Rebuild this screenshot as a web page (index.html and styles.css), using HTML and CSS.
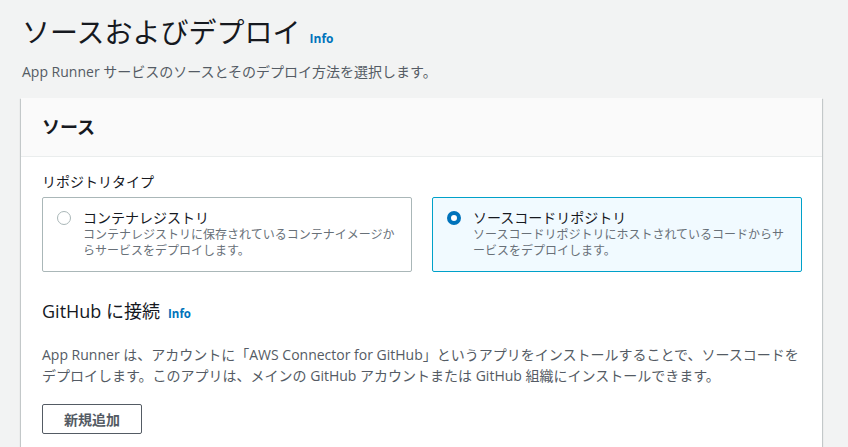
FILE: index.html
```html
<!DOCTYPE html>
<html lang="ja">
<head>
<meta charset="utf-8">
<link rel="stylesheet" href="styles.css">
</head>
<body>
<div class="page">
  <div class="page-head">
    <h1 class="title"><span>ソースおよびデプロイ</span><a class="info info-title">Info</a></h1>
    <p class="subtitle">App Runner サービスのソースとそのデプロイ方法を選択します。</p>
  </div>
  <section class="card">
    <div class="card-head"><h2>ソース</h2></div>
    <div class="card-body">
      <div class="label">リポジトリタイプ</div>
      <div class="tiles">
        <div class="tile">
          <span class="radio"></span>
          <div class="tile-text">
            <div class="tile-title">コンテナレジストリ</div>
            <div class="tile-desc">コンテナレジストリに保存されているコンテナイメージか<br>らサービスをデプロイします。</div>
          </div>
        </div>
        <div class="tile tile-selected">
          <span class="radio radio-on"></span>
          <div class="tile-text">
            <div class="tile-title">ソースコードリポジトリ</div>
            <div class="tile-desc">ソースコードリポジトリにホストされているコードからサ<br>ービスをデプロイします。</div>
          </div>
        </div>
      </div>
      <h3 class="sub-head"><span>GitHub に接続</span><a class="info info-sub">Info</a></h3>
      <p class="para">App Runner は、アカウントに「AWS Connector for GitHub」というアプリをインストールすることで、ソースコードを<br>デプロイします。このアプリは、メインの GitHub アカウントまたは GitHub 組織にインストールできます。</p>
      <button class="btn">新規追加</button>
    </div>
  </section>
</div>
</body>
</html>
```

FILE: styles.css
```css
html, body {
  margin: 0;
  padding: 0;
  background: #f2f3f3;
  font-family: "Open Sans", "Noto Sans CJK JP", sans-serif;
  color: #16191f;
  overflow: hidden;
}
.page {
  padding: 14px 26px 0 21px;
}
.page-head {
  padding-left: 1px;
}
.title {
  margin: 0;
  display: flex;
  align-items: baseline;
  height: 36px;
  font-size: 28px;
  line-height: 36px;
  font-weight: 400;
  color: #16191f;
}
.info {
  color: #0073bb;
  font-weight: 700;
  font-size: 12px;
  line-height: 16px;
  font-family: "Open Sans", sans-serif;
}
.info-title {
  margin-left: 9px;
}
.subtitle {
  margin: 12px 0 0;
  font-size: 14px;
  line-height: 20px;
  color: #545b64;
}
.card {
  margin-top: 16px;
  background: #fff;
  box-shadow: 0 1px 1px 0 rgba(0, 28, 36, 0.3), 1px 1px 1px 0 rgba(0, 28, 36, 0.15), -1px 1px 1px 0 rgba(0, 28, 36, 0.15);
}
.card-head {
  background: #fafafa;
  border-bottom: 1px solid #eaeded;
  padding: 18px 21px;
}
.card-head h2 {
  margin: 0;
  font-size: 18px;
  line-height: 22px;
  font-weight: 700;
}
.card-body {
  padding: 15px 20px 30px 21px;
}
.label {
  font-size: 14px;
  line-height: 20px;
  color: #16191f;
}
.tiles {
  margin-top: 5px;
  display: grid;
  grid-template-columns: 1fr 1fr;
  gap: 20px;
}
.tile {
  display: flex;
  align-items: flex-start;
  border: 1px solid #aab7b8;
  border-radius: 2px;
  padding: 10px 14px 12px 14px;
  background: #fff;
}
.tile-selected {
  border-color: #00a1c9;
  background: #f1faff;
}
.radio {
  flex: none;
  box-sizing: border-box;
  width: 14px;
  height: 14px;
  margin-top: 3px;
  border: 1px solid #aab7b8;
  border-radius: 50%;
  background: #fff;
}
.radio-on {
  border: 4px solid #0073bb;
  background: #fff;
}
.tile-text {
  margin-left: 12px;
}
.tile-title {
  font-size: 14px;
  line-height: 19px;
  color: #16191f;
}
.tile-desc {
  font-size: 12px;
  line-height: 16px;
  color: #687078;
}
.sub-head {
  margin: 27px 0 0;
  display: flex;
  align-items: baseline;
  height: 24px;
  font-size: 18px;
  line-height: 24px;
  font-weight: 400;
  color: #16191f;
}
.info-sub {
  margin-left: 8px;
  font-size: 11.5px;
}
.para {
  margin: 21px 0 0;
  font-size: 14px;
  line-height: 21px;
  color: #545b64;
}
.btn {
  display: block;
  margin-top: 18px;
  padding: 0 21px;
  height: 30px;
  border: 1px solid #545b64;
  border-radius: 2px;
  background: #fff;
  font-family: "Open Sans", "Noto Sans CJK JP", sans-serif;
  font-size: 14px;
  font-weight: 700;
  color: #545b64;
}
```
